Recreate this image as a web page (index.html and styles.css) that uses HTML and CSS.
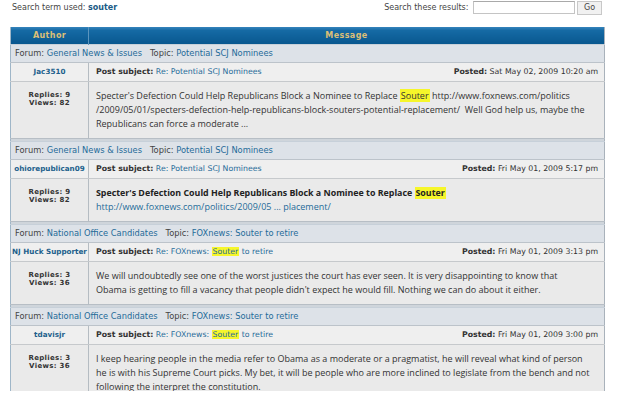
FILE: index.html
```html
<!DOCTYPE html>
<html lang="en">
<head>
<meta charset="utf-8">
<title>Search results</title>
<link rel="stylesheet" href="styles.css">
</head>
<body>
<div class="page">

<div class="searchbar">
 <span class="term">Search term used: <b>souter</b></span>
 <form class="refine" onsubmit="return false;">
  <label>Search these results: <input type="text"></label>
  <button type="button">Go</button>
 </form>
</div>

<table class="results">
 <thead>
  <tr><th class="col-author">Author</th><th>Message</th></tr>
 </thead>
 <tbody>
  <!-- post 1 -->
  <tr class="forum-row"><td colspan="2">Forum: <a href="#">General News &amp; Issues</a> &nbsp; Topic: <a href="#">Potential SCJ Nominees</a></td></tr>
  <tr class="head-row">
   <td class="name"><a href="#">Jac3510</a></td>
   <td><div class="subj"><span><b>Post subject:</b> <a href="#">Re: Potential SCJ Nominees</a></span><span><b>Posted:</b> Sat May 02, 2009 10:20 am</span></div></td>
  </tr>
  <tr class="body-row">
   <td class="stats"><b>Replies: 9</b><b>Views: 82</b></td>
   <td class="msg">Specter's Defection Could Help Republicans Block a Nominee to Replace <mark>Souter</mark> http://www.foxnews.com/politics<br>/2009/05/01/specters-defection-help-republicans-block-souters-potential-replacement/&nbsp; Well God help us, maybe the<br>Republicans can force a moderate ...</td>
  </tr>
  <tr class="spacer"><td colspan="2"></td></tr>

  <!-- post 2 -->
  <tr class="forum-row"><td colspan="2">Forum: <a href="#">General News &amp; Issues</a> &nbsp; Topic: <a href="#">Potential SCJ Nominees</a></td></tr>
  <tr class="head-row">
   <td class="name"><a href="#">ohiorepublican09</a></td>
   <td><div class="subj"><span><b>Post subject:</b> <a href="#">Re: Potential SCJ Nominees</a></span><span><b>Posted:</b> Fri May 01, 2009 5:17 pm</span></div></td>
  </tr>
  <tr class="body-row">
   <td class="stats"><b>Replies: 9</b><b>Views: 82</b></td>
   <td class="msg"><strong class="title">Specter's Defection Could Help Republicans Block a Nominee to Replace <mark>Souter</mark></strong><br><a href="#">http://www.foxnews.com/politics/2009/05 ... placement/</a></td>
  </tr>
  <tr class="spacer"><td colspan="2"></td></tr>

  <!-- post 3 -->
  <tr class="forum-row"><td colspan="2">Forum: <a href="#">National Office Candidates</a> &nbsp; Topic: <a href="#">FOXnews: Souter to retire</a></td></tr>
  <tr class="head-row">
   <td class="name"><a href="#">NJ Huck Supporter</a></td>
   <td><div class="subj"><span><b>Post subject:</b> <a href="#">Re: FOXnews: <mark>Souter</mark> to retire</a></span><span><b>Posted:</b> Fri May 01, 2009 3:13 pm</span></div></td>
  </tr>
  <tr class="body-row">
   <td class="stats"><b>Replies: 3</b><b>Views: 36</b></td>
   <td class="msg">We will undoubtedly see one of the worst justices the court has ever seen. It is very disappointing to know that<br>Obama is getting to fill a vacancy that people didn't expect he would fill. Nothing we can do about it either.</td>
  </tr>
  <tr class="spacer"><td colspan="2"></td></tr>

  <!-- post 4 -->
  <tr class="forum-row"><td colspan="2">Forum: <a href="#">National Office Candidates</a> &nbsp; Topic: <a href="#">FOXnews: Souter to retire</a></td></tr>
  <tr class="head-row">
   <td class="name"><a href="#">tdavisjr</a></td>
   <td><div class="subj"><span><b>Post subject:</b> <a href="#">Re: FOXnews: <mark>Souter</mark> to retire</a></span><span><b>Posted:</b> Fri May 01, 2009 3:00 pm</span></div></td>
  </tr>
  <tr class="body-row">
   <td class="stats"><b>Replies: 3</b><b>Views: 36</b></td>
   <td class="msg">I keep hearing people in the media refer to Obama as a moderate or a pragmatist, he will reveal what kind of person<br>he is with his Supreme Court picks. My bet, it will be people who are more inclined to legislate from the bench and not<br>following the interpret the constitution.</td>
  </tr>
 </tbody>
</table>

</div>
</body>
</html>
```

FILE: styles.css
```css
/* ---------- Base ---------- */
*{box-sizing:border-box}
body{margin:0;background:#fff;color:#333;font-family:"DejaVu Sans",Verdana,sans-serif;font-size:7.8px}
a{color:#1f6b99;text-decoration:none}
mark{background:#f6f62a;color:inherit;padding:0 1px}
.page{width:605px;height:391px;overflow:hidden;padding-left:10px}

/* ---------- Search bar ---------- */
.searchbar{display:flex;justify-content:space-between;align-items:center;height:15px;padding:0 3px 0 2px;margin-bottom:12px}
.term{font-size:8px;color:#444}
.term b{color:#1a5b86}
.refine{display:flex;align-items:center;gap:2px;font-size:8px;color:#444}
.refine input{width:102px;height:13px;margin:0 0 0 2px;border:1px solid #c4c4c4;border-top-color:#a9a9a9;padding:0;vertical-align:middle}
.refine button{height:14px;width:25px;padding:0;border:1px solid #c8c8c8;background:#f1f1f1;font:inherit;color:#444}

/* ---------- Results table ---------- */
.results{width:595px;border-collapse:collapse;border-left:1px solid #9fb6c8;border-right:1px solid #a9b2bb}
.results th{height:17px;padding:0;background:linear-gradient(#3584bc,#166aa4 20%,#08578f);color:#dcbf76;font-weight:bold;font-size:8px;letter-spacing:.4px;text-align:center}
.results th.col-author{width:78px;border-right:1px solid #5b95be}
.results td{padding:0}

.forum-row td{height:18px;padding:0 4px;background:#dde2e8;border-top:1px solid #c7d0d9;border-bottom:1px solid #bcc3ca;font-size:8.3px;color:#444}
.head-row td{height:19px;background:#efefef;border-bottom:1px solid #c6c9cc}
.head-row td.name{text-align:center;font-weight:bold;font-size:7.2px;white-space:nowrap;border-right:1px solid #b5bcc2}
.head-row td.name a{color:#1c5f8c}
.subj{display:flex;justify-content:space-between;padding:0 6px 0 7px}
.subj b{color:#333}

.body-row td{background:#eaeaea;vertical-align:top}
.stats{border-right:1px solid #b5bcc2;padding-top:9px !important;text-align:center}
.stats b{display:block;font-size:7px;line-height:8px;color:#333;letter-spacing:.3px}
.msg{padding:7px !important;font-family:"Open Sans",sans-serif;font-size:9px;line-height:14px;color:#333}
.msg .title{font-size:8.85px;font-weight:bold;color:#222}
.spacer td{height:3px;background:#cfd5db;border-top:1px solid #b7bec5}
```
